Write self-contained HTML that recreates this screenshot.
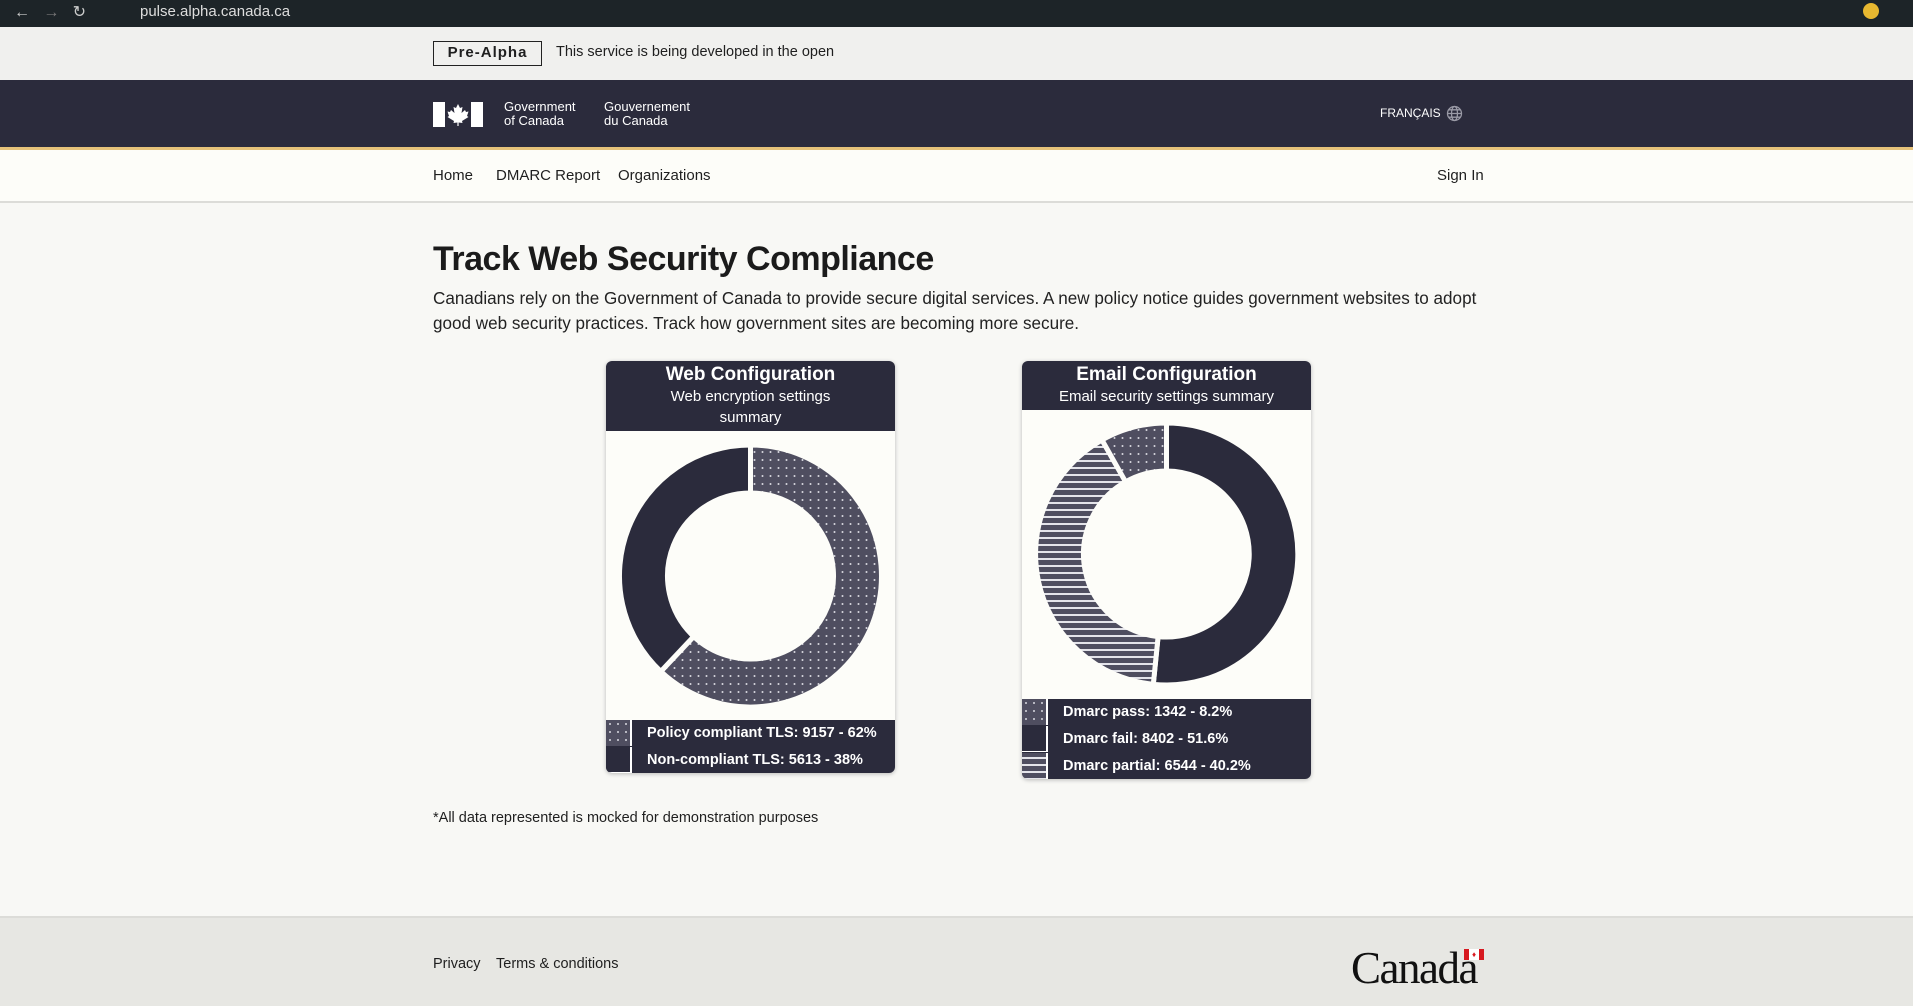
<!DOCTYPE html>
<html><head><meta charset="utf-8"><style>
*{margin:0;padding:0;box-sizing:border-box}
body{width:1913px;height:1006px;overflow:hidden;background:#f8f8f5;font-family:"Liberation Sans",sans-serif;color:#1f1f1f;position:relative}
.abs{position:absolute;white-space:nowrap}
#bb{position:absolute;left:0;top:0;width:1913px;height:27px;background:#1d2428}
#pa{position:absolute;left:0;top:27px;width:1913px;height:53px;background:#f0f0ee}
#hd{position:absolute;left:0;top:80px;width:1913px;height:70px;background:#2b2b3c;border-bottom:3px solid #e6c27a}
#nav{position:absolute;left:0;top:150px;width:1913px;height:53px;background:#fdfdf9;border-bottom:2px solid #dcdcd8}
#ft{position:absolute;left:0;top:916px;width:1913px;height:90px;background:#e7e7e3;border-top:2px solid #dcdcd8}
.card{position:absolute;background:#fdfdf9;border-radius:6px;overflow:hidden;box-shadow:0 1px 4px rgba(0,0,0,.25)}
.ch{background:#2b2b3c;color:#fff;text-align:center}
.ch b{display:block;font-size:19px;padding-top:3px}
.ch span{display:block;font-size:15px;line-height:21px}
.leg{position:absolute;left:0;width:100%;background:#2b2b3c;color:#fff;font-weight:bold;font-size:14.5px}
.row{height:27px;position:relative}
.sw{position:absolute;left:0;top:0;width:26px;height:26px;border-right:2px solid #fff;border-bottom:1px solid #fff}
.row span{position:absolute;left:41px;top:5px}
</style></head><body>
<svg width="0" height="0" style="position:absolute"><defs>
<pattern id="dots" width="8" height="8" patternUnits="userSpaceOnUse"><rect width="8" height="8" fill="#4f4e60"/><circle cx="4" cy="4" r="1" fill="#d8d8e0"/></pattern>
<pattern id="str" width="8" height="7" patternUnits="userSpaceOnUse"><rect width="8" height="7" fill="#4f4e60"/><rect y="4" width="8" height="2" fill="#e4e4ea"/></pattern>
</defs></svg>
<div id="bb"><span class="abs" style="left:14px;top:2px;color:#ccc;font-size:16px">&#8592;&#160;&#160;&#160;<span style="color:#777">&#8594;</span>&#160;&#160;&#160;&#8635;</span>
<span class="abs" style="left:140px;top:3px;color:#ddd;font-size:15px">pulse.alpha.canada.ca</span>
<span class="abs" style="left:1863px;top:3px;width:16px;height:16px;border-radius:8px;background:#e8b830"></span></div>
<div id="pa"><div class="abs" style="left:433px;top:14px;width:109px;height:25px;border:1.5px solid #222;font-size:15px;letter-spacing:1px;font-weight:bold;text-align:center;line-height:22px">Pre-Alpha</div>
<span class="abs" style="left:556px;top:17px;font-size:14.5px">This service is being developed in the open</span></div>
<div id="hd">
<div class="abs" style="left:433px;top:22px;width:12px;height:25px;background:#fff"></div>
<div class="abs" style="left:471px;top:22px;width:12px;height:25px;background:#fff"></div>
<svg class="abs" style="left:447px;top:23px" width="22" height="23" viewBox="0 0 22 23"><path fill="#fff" d="M11 1 L13 5 L15.5 4 L14.5 10 L18 7 L19 9 L21.5 8.5 L20 13 L21.5 14 L15 18 L15.5 20 L11.6 19.5 L11.6 23 L10.4 23 L10.4 19.5 L6.5 20 L7 18 L0.5 14 L2 13 L0.5 8.5 L3 9 L4 7 L7.5 10 L6.5 4 L9 5 Z"/></svg>
<span class="abs" style="left:504px;top:20px;color:#fff;font-size:13px;line-height:14px">Government<br>of Canada</span>
<span class="abs" style="left:604px;top:20px;color:#fff;font-size:13px;line-height:14px">Gouvernement<br>du Canada</span>
<span class="abs" style="left:1380px;top:26px;color:#fff;font-size:12px">FRANÇAIS</span>
<svg class="abs" style="left:1446px;top:25px" width="17" height="17" viewBox="0 0 17 17" fill="none" stroke="#9a9aa6" stroke-width="1.3"><circle cx="8.5" cy="8.5" r="7"/><ellipse cx="8.5" cy="8.5" rx="3" ry="7"/><path d="M1.5 8.5h14M3 4.8h11M3 12.2h11"/></svg>
</div>
<div id="nav">
<span class="abs" style="left:433px;top:17px;font-size:15px">Home</span>
<span class="abs" style="left:496px;top:17px;font-size:15px">DMARC Report</span>
<span class="abs" style="left:618px;top:17px;font-size:15px">Organizations</span>
<span class="abs" style="left:1437px;top:17px;font-size:15px">Sign In</span>
</div>
<div class="abs" style="left:433px;top:240px;font-size:34px;font-weight:bold;color:#1b1b1b;letter-spacing:-0.5px">Track Web Security Compliance</div>
<div class="abs" style="left:433px;top:287px;font-size:17.1px;line-height:24.5px;color:#222">Canadians rely on the Government of Canada to provide secure digital services. A new policy notice guides government websites to adopt<br>good web security practices. Track how government sites are becoming more secure.</div>

<div class="card" style="left:606px;top:361px;width:289px;height:412px">
<div class="ch" style="height:70px"><b>Web Configuration</b><span>Web encryption settings<br>summary</span></div>
<svg style="position:absolute;left:0;top:70px" width="289" height="290" viewBox="-144.5 -145 289 290">
<g stroke="#fdfdf9" stroke-width="5">
<path d="M0 -131 A131 131 0 1 1 -89.7 95.5 L-56.8 60.5 A83 83 0 1 0 0 -83 Z" fill="url(#dots)"/>
<path d="M-89.7 95.5 A131 131 0 0 1 0 -131 L0 -83 A83 83 0 0 0 -56.8 60.5 Z" fill="#2b2b3c"/>
</g></svg>
<div class="leg" style="top:359px;height:53px">
<div class="row"><div class="sw"><svg width="24" height="26"><rect width="24" height="26" fill="url(#dots)"/></svg></div><span>Policy compliant TLS: 9157 - 62%</span></div>
<div class="row"><div class="sw" style="background:#2b2b3c"></div><span>Non-compliant TLS: 5613 - 38%</span></div>
</div></div>

<div class="card" style="left:1022px;top:361px;width:289px;height:418px">
<div class="ch" style="height:49px"><b>Email Configuration</b><span>Email security settings summary</span></div>
<svg style="position:absolute;left:0;top:49px" width="289" height="290" viewBox="-144.5 -144 289 290">
<g stroke="#fdfdf9" stroke-width="5">
<path d="M0 -131 A131 131 0 1 1 -13.2 130.3 L-8.4 82.6 A83 83 0 1 0 0 -83 Z" fill="#2b2b3c"/>
<path d="M-13.2 130.3 A131 131 0 0 1 -64.5 -114 L-40.9 -72.2 A83 83 0 0 0 -8.4 82.6 Z" fill="url(#str)"/>
<path d="M-64.5 -114 A131 131 0 0 1 0 -131 L0 -83 A83 83 0 0 0 -40.9 -72.2 Z" fill="url(#dots)"/>
</g></svg>
<div class="leg" style="top:338px;height:80px">
<div class="row"><div class="sw"><svg width="24" height="26"><rect width="24" height="26" fill="url(#dots)"/></svg></div><span>Dmarc pass: 1342 - 8.2%</span></div>
<div class="row"><div class="sw" style="background:#2b2b3c"></div><span>Dmarc fail: 8402 - 51.6%</span></div>
<div class="row"><div class="sw"><svg width="24" height="26"><rect width="24" height="26" fill="url(#str)"/></svg></div><span>Dmarc partial: 6544 - 40.2%</span></div>
</div></div>

<div class="abs" style="left:433px;top:810px;font-size:14.5px">*All data represented is mocked for demonstration purposes</div>
<div id="ft">
<span class="abs" style="left:433px;top:38px;font-size:14.5px">Privacy</span>
<span class="abs" style="left:496px;top:38px;font-size:14.5px">Terms &amp; conditions</span>
<span class="abs" style="left:1351px;top:24px;font-family:'Liberation Serif',serif;font-size:45px;color:#111;letter-spacing:-1.5px">Canada</span>
<div class="abs" style="left:1464px;top:31px;width:20px;height:11px;background:#d71920"><div style="margin:0 5px;width:10px;height:11px;background:#fff;text-align:center;color:#d71920;font-size:8px;line-height:11px">&#9830;</div></div>
</div>
</body></html>
